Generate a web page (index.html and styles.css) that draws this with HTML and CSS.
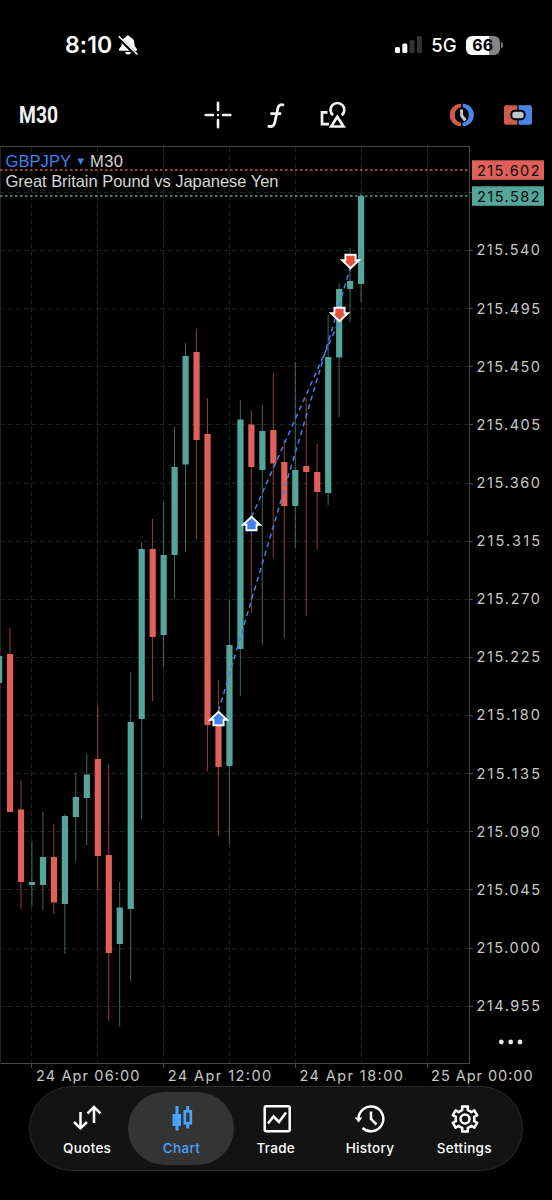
FILE: index.html
```html
<!DOCTYPE html>
<html lang="en">
<head>
    <meta charset="UTF-8">
    <meta name="viewport" content="width=device-width, initial-scale=1.0">
    <title>GBPJPY M30</title>
    <link rel="stylesheet" href="styles.css">
</head>
<body>
    <div class="app">
        <header class="status-bar">
            <div class="status-left">
                <span class="clock">8:10</span>
                <svg width="20" height="20" viewBox="0 0 20 20">
                    <path d="M10 .5C9 .5 8.300 1.200 8.100 2.100C5 3 3.800 5.300 3.700 8C3.500 11.500 2.700 12 1.300 13.700C.5 14.700 1 15.800 2 15.800H18C19 15.800 19.500 14.700 18.700 13.700C17.300 12 16.500 11.500 16.300 8C16.200 5.300 15 3 11.900 2.100C11.700 1.200 11 .5 10 .5Z" fill="#fff"/>
                    <path d="M7 17H13C12.700 18.700 11.600 19.500 10 19.500S7.300 18.700 7 17Z" fill="#fff"/>
                    <path d="M.5 2.500L18.300 19.800" stroke="#000" stroke-width="3.600"/>
                    <path d="M1.200 1.700L19 19" stroke="#fff" stroke-width="1.600" stroke-linecap="round"/>
                </svg>
            </div>
            <div class="status-right">
                <svg width="28" height="18" viewBox="0 0 28 18">
                    <rect x="0" y="11" width="5" height="6" rx="1.500" fill="#fff"/>
                    <rect x="7.300" y="7.500" width="5" height="9.500" rx="1.500" fill="#fff"/>
                    <rect x="14.600" y="4" width="5" height="13" rx="1.500" fill="#333"/>
                    <rect x="21.900" y="0" width="5" height="17" rx="1.500" fill="#333"/>
                </svg>
                <span class="network">5G</span>
                <div class="battery"><span>66</span></div>
                <i class="battery-tip"></i>
            </div>
        </header>

        <nav class="toolbar">
            <svg class="timeframe" width="50" height="36" viewBox="0 0 50 36">
                <text x="0" y="26" textLength="39" lengthAdjust="spacingAndGlyphs">M30</text>
            </svg>
            <div class="tools">
                <svg width="28" height="28" viewBox="0 0 28 28" fill="none" stroke="#f2f2f2" stroke-width="2.600" stroke-linecap="round">
                    <path d="M14 1.700V9M14 19V26.300M1.700 14H9M19 14H26.300"/>
                    <circle cx="14" cy="14" r="1.200" fill="#f2f2f2" stroke="none"/>
                </svg>
                <svg width="20" height="28" viewBox="0 0 20 28" fill="none" stroke="#f2f2f2" stroke-width="2.800">
                    <path d="M18 4.200C15 2.900 12.600 3.800 11.900 7L8.800 21.500C8 25.300 5 26.200 1.700 25M4.300 12.600H15.200"/>
                </svg>
                <svg width="26" height="28" viewBox="0 0 26 28" fill="none" stroke="#f2f2f2" stroke-width="2.700">
                    <path d="M7.500 11.300H2V23.200H9"/>
                    <path d="M13 14.200A6.900 6.900 0 1 1 21.800 14.200"/>
                    <path d="M17.300 15.800L23.500 25.500H11.200Z"/>
                </svg>
            </div>
            <div class="trade-tools">
                <svg width="28" height="24" viewBox="0 0 28 24" fill="none">
                    <path d="M13 .7A11.300 11.300 0 0 0 13 23.300V19.800A8 8 0 0 1 13 4.200Z" fill="#cf5b4c"/>
                    <path d="M14.600 .7A11.300 11.300 0 0 1 14.600 23.300V19.800A8 8 0 0 0 14.600 4.200Z" fill="#4a86e8"/>
                    <path d="M13.600 6.500V12.500L17.300 17.500" stroke="#c4c7cc" stroke-width="3"/>
                </svg>
                <svg width="28" height="24" viewBox="0 0 28 24">
                    <path d="M2 2.300H13.300V21.700H2Q0 21.700 0 19.700V4.300Q0 2.300 2 2.300Z" fill="#cf5b4c"/>
                    <path d="M14.500 2.300H26Q28 2.300 28 4.300V19.700Q28 21.700 26 21.700H14.500Z" fill="#4a86e8"/>
                    <rect x="7.300" y="7.700" width="13.400" height="8.600" rx="3.800" fill="#bfc3c9" stroke="#000" stroke-width="2"/>
                </svg>
            </div>
        </nav>

        <main class="chart">
            <svg id="chart" width="552" height="940" viewBox="0 146 552 940"></svg>
        </main>

        <nav class="tabs">
            <a class="tab">
                <svg width="32" height="32" viewBox="0 0 32 32" fill="none" stroke="#fff" stroke-width="2.500">
                    <path d="M9.500 9V25M3 19L9.500 25.300L16 19M23 20V4M16.500 10.300L23 4L29.500 10.300"/>
                </svg>
                <span>Quotes</span>
            </a>
            <a class="tab active">
                <svg width="32" height="32" viewBox="0 0 32 32">
                    <path d="M10.500 3H13.500V11H16V23H13.500V27.500H10.500V23H7.500V11H10.500Z" fill="#4aa3ff"/>
                    <path d="M22.700 3V8M22.700 21V25.500" stroke="#4aa3ff" stroke-width="3"/>
                    <rect x="19.800" y="8.300" width="6" height="12" fill="none" stroke="#4aa3ff" stroke-width="2.700"/>
                </svg>
                <span>Chart</span>
            </a>
            <a class="tab">
                <svg width="32" height="32" viewBox="0 0 32 32" fill="none" stroke="#fff" stroke-width="2.500">
                    <rect x="4.700" y="3.200" width="25" height="25" rx="1.500"/>
                    <path d="M8 20.500L13.500 13.500L19 19L26 9.500"/>
                </svg>
                <span>Trade</span>
            </a>
            <a class="tab">
                <svg width="32" height="32" viewBox="0 0 32 32" fill="none" stroke="#fff" stroke-width="2.500">
                    <path d="M4.500 16A12.400 12.400 0 1 1 8.500 25"/>
                    <path d="M.8 14.500H8.400L4.600 19.500Z" fill="#fff" stroke="none"/>
                    <path d="M17 8.500V16L22.500 21.500"/>
                </svg>
                <span>History</span>
            </a>
            <a class="tab">
                <svg id="gear" width="32" height="32" viewBox="0 0 32 32" fill="none" stroke="#fff" stroke-width="2.500" stroke-linejoin="round">
                    <circle cx="17" cy="16" r="4.500"/>
                </svg>
                <span>Settings</span>
            </a>
        </nav>
    </div>

    <script>
        const UP = '#54a59a';
        const DOWN = '#e05f58';
        const chart = document.getElementById('chart');

        // direction, high, body top, body bottom, low
        const candles = [
            ['u', 656, 656, 683, 683],
            ['d', 627.5, 654, 812, 812],
            ['d', 780, 809.5, 882, 909],
            ['u', 841, 882, 885, 907],
            ['u', 812, 857, 885, 910],
            ['d', 824, 857, 902.5, 914],
            ['u', 814, 816, 904, 954],
            ['u', 773, 797, 817, 861],
            ['u', 754, 774.5, 798, 845],
            ['d', 705, 759, 856, 890],
            ['d', 764, 855, 953, 1021],
            ['u', 882, 907.5, 944, 1026.5],
            ['u', 672, 722, 909, 981],
            ['u', 542, 549, 719, 819],
            ['d', 519, 549, 637, 701],
            ['u', 503, 555, 635, 667],
            ['u', 427, 467, 555, 599],
            ['u', 343, 356, 464.5, 552],
            ['d', 329, 352, 440, 539],
            ['d', 398, 434, 725, 771],
            ['d', 680, 725, 767, 836],
            ['u', 600, 645, 766, 844],
            ['u', 400, 419.5, 649, 696],
            ['d', 410, 424.5, 467, 613],
            ['u', 405, 431, 470, 645],
            ['d', 373, 430, 463.5, 558],
            ['d', 440, 462, 506, 638],
            ['u', 362, 470, 506, 548],
            ['d', 398, 466, 472, 616],
            ['d', 444, 472, 492, 549],
            ['u', 315, 357, 493, 505],
            ['u', 283, 289, 357.5, 417],
            ['u', 248, 281, 289, 322],
            ['u', 193, 196, 284, 302]
        ];

        function add(tag, attrs, text) {
            const el = document.createElementNS('http://www.w3.org/2000/svg', tag);
            for (const key in attrs) el.setAttribute(key, attrs[key]);
            if (text) el.textContent = text;
            chart.appendChild(el);
        }

        function line(x1, y1, x2, y2, cls) {
            add('line', { x1, y1, x2, y2, class: cls });
        }

        // grid and axis labels
        for (let i = 0; i < 7; i++) {
            const x = Math.round(31 + i * 65.95) + 0.5;
            line(x, 147, x, 1063, 'grid');
            if (i % 2 === 0) line(x, 1064, x, 1068, 'frame');
        }
        for (let i = 0; i < 15; i++) {
            const y = 192 + i * 58.12;
            line(0, Math.round(y) + 0.5, 469, Math.round(y) + 0.5, 'grid');
            line(470, Math.round(y) + 0.5, 473, Math.round(y) + 0.5, 'frame');
            if (i > 0) {
                add('text', { x: 476.5, y: y + 5.3, textLength: 63.5, class: 'label' }, (215.585 - i * 0.045).toFixed(3));
            }
        }
        ['24 Apr 06:00', '24 Apr 12:00', '24 Apr 18:00', '25 Apr 00:00'].forEach((t, i) => {
            add('text', { x: 36 + i * 131.7, y: 1081, textLength: i === 3 ? 101.5 : 103.5, class: 'label' }, t);
        });
        line(0, 146.5, 470, 146.5, 'frame');
        line(469.5, 146, 469.5, 1064, 'frame');
        line(0, 1063.5, 470, 1063.5, 'frame');
        line(0.5, 147, 0.5, 1064, 'edge');

        // candles
        candles.forEach(([dir, high, top, bottom, low], i) => {
            const x = -1 + i * 10.97;
            const color = dir === 'u' ? UP : DOWN;
            add('rect', { x: x - 0.5, y: high, width: 1, height: low - high, fill: color, opacity: 0.65 });
            add('rect', { x: x - 3, y: top, width: 6.2, height: bottom - top, fill: color });
        });

        // current ask and bid
        line(0, 170, 469, 170, 'ask');
        line(0, 196, 469, 196, 'bid');
        add('rect', { x: 472, y: 160.3, width: 72, height: 19.5, fill: DOWN });
        add('rect', { x: 472, y: 186.3, width: 72, height: 19.5, fill: UP });
        add('text', { x: 477, y: 175.5, textLength: 62.5, class: 'price' }, '215.602');
        add('text', { x: 477, y: 201.5, textLength: 62.5, class: 'price' }, '215.582');

        // closed trades
        line(251.5, 517, 340, 319, 'deal');
        line(218.5, 711, 350.5, 267, 'deal');

        function arrow(x, y, dir, color) {
            add('path', {
                d: 'M0 1.2L8.500 9.300H5.100V14.800H-5.100V9.300H-8.500Z',
                transform: `translate(${x} ${y}) scale(1 ${dir})`,
                fill: color, stroke: '#fff', 'stroke-width': 1.900
            });
        }
        arrow(251.5, 515.5, 1, '#3f82f0');
        arrow(218.5, 710.5, 1, '#3f82f0');
        arrow(350.5, 269.5, -1, '#e2513c');
        arrow(339.5, 322.5, -1, '#e2513c');

        // title
        add('text', { x: 5.5, y: 166.5, textLength: 65.5, class: 'symbol' }, 'GBPJPY');
        add('path', { d: 'M77.500 158.500H84L80.700 165Z', fill: '#3f82f0' });
        add('text', { x: 90, y: 166.5, textLength: 33, class: 'title' }, 'M30');
        add('text', { x: 5.5, y: 187, textLength: 273, class: 'title' }, 'Great Britain Pound vs Japanese Yen');

        // more button
        [501.3, 510.7, 520].forEach(cx => add('circle', { cx, cy: 1042, r: 2.4, fill: '#e8e8e8' }));

        // settings gear outline
        let d = '';
        for (let i = 0; i < 6; i++) {
            [[-28, 9.3], [-17, 9.3], [-13, 12.8], [13, 12.8], [17, 9.3], [28, 9.3]].forEach(([a, r]) => {
                const t = (i * 60 - 90 + a) * Math.PI / 180;
                d += (d ? 'L' : 'M') + (17 + r * Math.cos(t)).toFixed(2) + ' ' + (16 + r * Math.sin(t)).toFixed(2);
            });
        }
        const gear = document.createElementNS('http://www.w3.org/2000/svg', 'path');
        gear.setAttribute('d', d + 'Z');
        document.getElementById('gear').appendChild(gear);
    </script>
</body>
</html>
```
FILE: styles.css
```css
body {
    margin: 0;
    background-color: #000;
    color: #fff;
    font-family: Inter, "Liberation Sans", sans-serif;
}

svg {
    display: block;
    flex-shrink: 0;
}

.app {
    width: 552px;
    height: 1200px;
    overflow: hidden;
    background-color: #000;
}

.status-bar {
    display: flex;
    justify-content: space-between;
    align-items: center;
    height: 90px;
    box-sizing: border-box;
    padding: 0 49px 0 65px;
}

.status-left, .status-right {
    display: flex;
    align-items: center;
}

.status-left {
    gap: 6px;
}

.clock {
    font-size: 23px;
    font-weight: 600;
    letter-spacing: 0.1px;
}

.network {
    margin: 0 9px 0 8px;
    font-size: 18.500px;
    font-weight: 500;
}

.battery {
    width: 34.5px;
    height: 19px;
    border-radius: 6px;
    background: linear-gradient(to right, #fff 67%, #858585 67%);
    color: #000;
    font-size: 16px;
    font-weight: 700;
    line-height: 19px;
    text-align: center;
}

.battery-tip {
    width: 2px;
    height: 6px;
    margin-left: 1px;
    border-radius: 0 2px 2px 0;
    background-color: #777;
}

.toolbar {
    display: flex;
    align-items: center;
    height: 56px;
    box-sizing: border-box;
    padding: 0 20px 6px 19px;
}

.timeframe text {
    font-family: Roboto, sans-serif;
    font-size: 23px;
    font-weight: 700;
    fill: #f2f2f2;
}

.tools {
    display: flex;
    gap: 34px;
    margin-left: 135px;
}

.trade-tools {
    display: flex;
    gap: 28px;
    margin-left: auto;
}

.chart {
    height: 940px;
}

.grid {
    stroke: #1f2021;
    stroke-dasharray: 5 3;
}

.frame {
    stroke: #48484a;
}

.edge {
    stroke: #242424;
}

.ask, .bid {
    stroke-width: 1.500;
    stroke-dasharray: 2.500 2.500;
}

.ask {
    stroke: #c25957;
}

.bid {
    stroke: #529e93;
}

.deal {
    stroke: #467fe6;
    stroke-width: 1.500;
    stroke-dasharray: 5 4;
}

.label, .price {
    font-family: Inter, sans-serif;
    font-size: 14.500px;
    fill: #c8c8c8;
}

.price {
    fill: #0c0c0c;
}

.symbol, .title {
    font-family: "Liberation Sans", Arial, sans-serif;
    font-size: 16.500px;
    fill: #d6d6d6;
}

.symbol {
    fill: #3f82f0;
}

.tabs {
    display: flex;
    width: 494px;
    height: 85px;
    box-sizing: border-box;
    margin-left: 29px;
    padding: 5px 10px;
    border: 1px solid #2b2b2b;
    border-radius: 43px;
    background-color: #131313;
}

.tab {
    display: flex;
    flex-direction: column;
    align-items: center;
    flex: 0 0 94.3px;
    box-sizing: border-box;
    padding-top: 11px;
    border-radius: 37px;
    font-size: 13.500px;
    font-weight: 500;
    letter-spacing: 0.3px;
}

.tab span {
    margin-top: 4px;
    line-height: 18px;
}

.tab.active {
    flex-basis: 106px;
    margin: 0 -5.850px;
    background-color: #343434;
    color: #4aa3ff;
}
```
